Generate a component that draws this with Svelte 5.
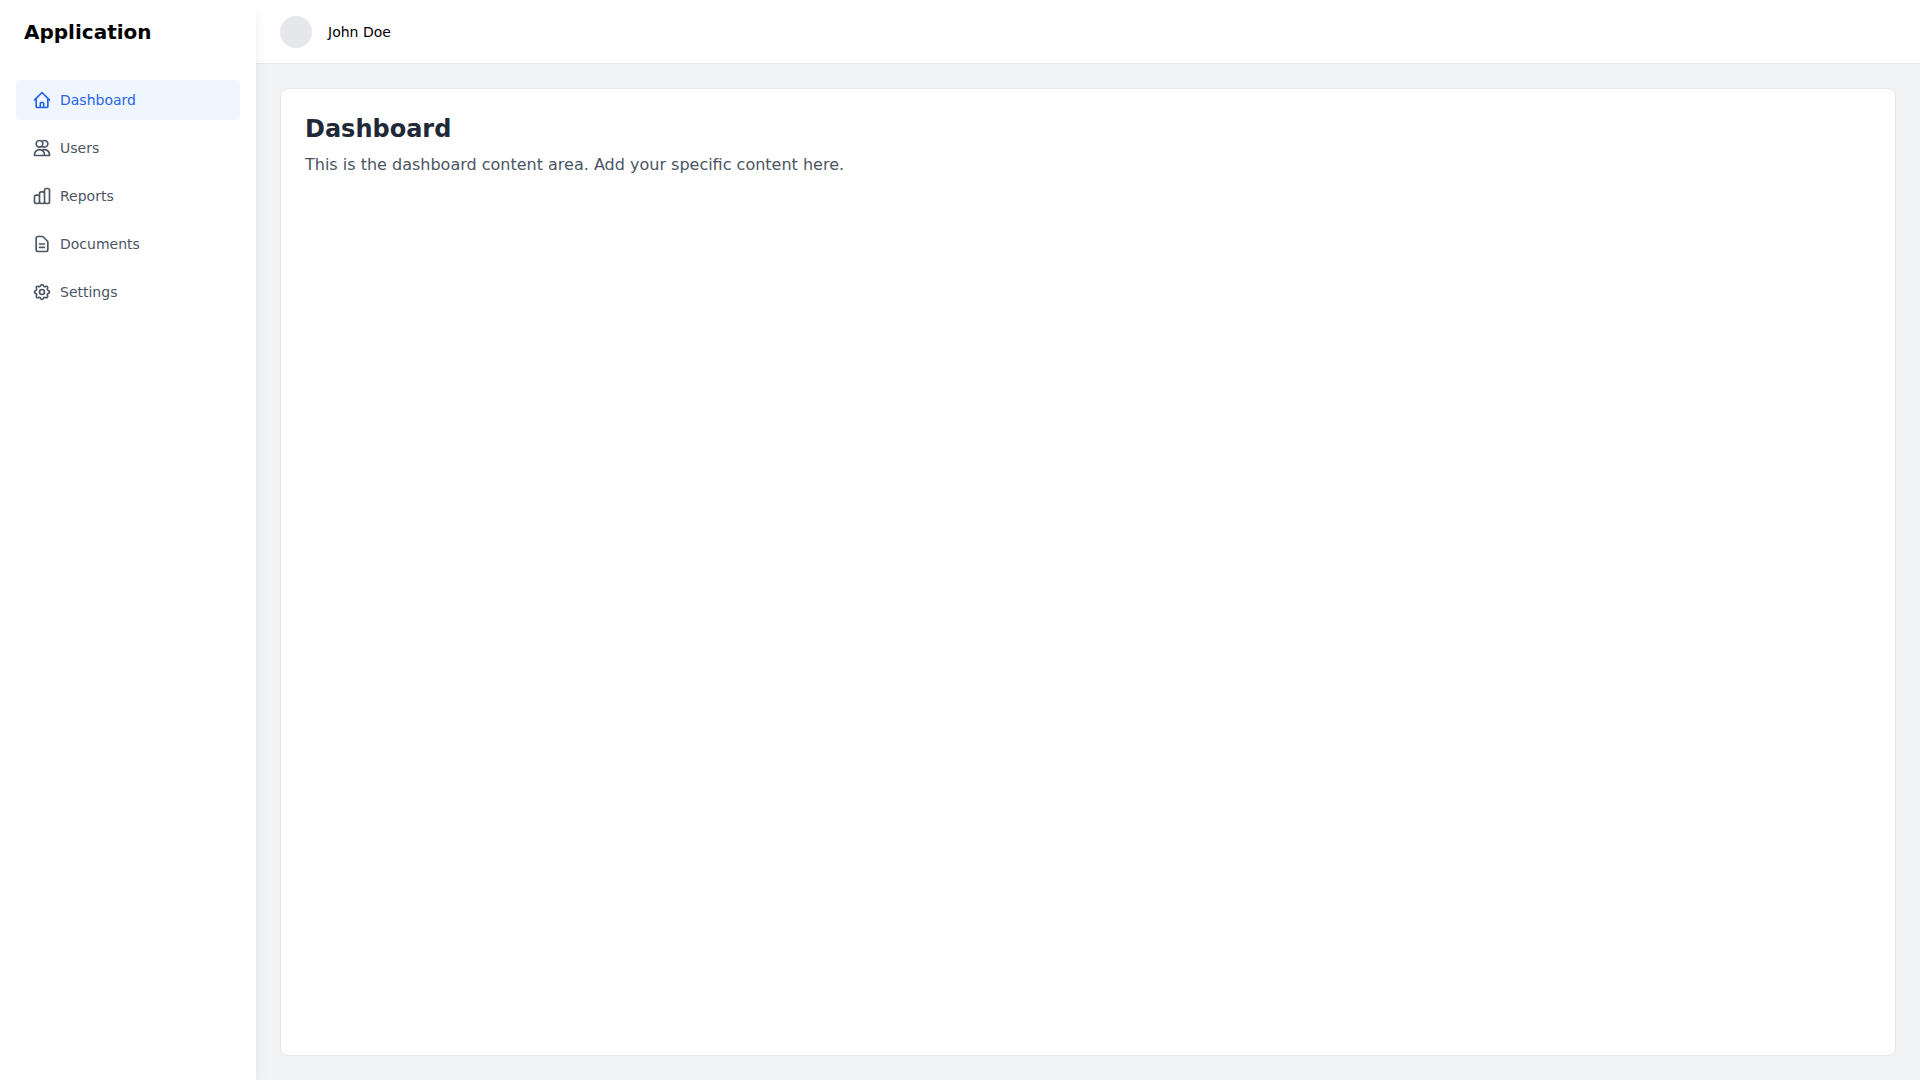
<script>
  let active = "Dashboard";

  const user = { name: "John Doe" };

  const links = [
    {
      name: "Dashboard",
      icon: "M3 12l2-2m0 0l7-7 7 7M5 10v10a1 1 0 001 1h3m10-11l2 2m-2-2v10a1 1 0 01-1 1h-3m-6 0a1 1 0 001-1v-4a1 1 0 011-1h2a1 1 0 011 1v4a1 1 0 001 1m-6 0h6",
    },
    {
      name: "Users",
      icon: "M12 4.354a4 4 0 110 5.292M15 21H3v-1a6 6 0 0112 0v1zm0 0h6v-1a6 6 0 00-9-5.197M13 7a4 4 0 11-8 0 4 4 0 018 0z",
    },
    {
      name: "Reports",
      icon: "M9 19v-6a2 2 0 00-2-2H5a2 2 0 00-2 2v6a2 2 0 002 2h2a2 2 0 002-2zm0 0V9a2 2 0 012-2h2a2 2 0 012 2v10m-6 0a2 2 0 002 2h2a2 2 0 002-2m0 0V5a2 2 0 012-2h2a2 2 0 012 2v14a2 2 0 01-2 2h-2a2 2 0 01-2-2z",
    },
    {
      name: "Documents",
      icon: "M9 12h6m-6 4h6m2 5H7a2 2 0 01-2-2V5a2 2 0 012-2h5.586a1 1 0 01.707.293l5.414 5.414a1 1 0 01.293.707V19a2 2 0 01-2 2z",
    },
    {
      name: "Settings",
      icon: "M10.325 4.317c.426-1.756 2.924-1.756 3.35 0a1.724 1.724 0 002.573 1.066c1.543-.94 3.31.826 2.37 2.37a1.724 1.724 0 001.065 2.572c1.756.426 1.756 2.924 0 3.35a1.724 1.724 0 00-1.066 2.573c.94 1.543-.826 3.31-2.37 2.37a1.724 1.724 0 00-2.572 1.065c-.426 1.756-2.924 1.756-3.35 0a1.724 1.724 0 00-2.573-1.066c-1.543.94-3.31-.826-2.37-2.37a1.724 1.724 0 00-1.065-2.572c-1.756-.426-1.756-2.924 0-3.35a1.724 1.724 0 001.066-2.573c-.94-1.543.826-3.31 2.37-2.37.996.608 2.296.07 2.572-1.065zM15 12a3 3 0 11-6 0 3 3 0 016 0z",
    },
  ];

  const handleClick = (name) => {
    active = name;
  };
</script>

<div class="layout">
  <aside class="sidebar">
    <div class="brand">Application</div>
    <nav>
      {#each links as link}
        <a
          href={"#/" + link.name.toLowerCase()}
          class:active={active === link.name}
          on:click={() => handleClick(link.name)}
        >
          <svg viewBox="0 0 24 24" aria-hidden="true">
            <path d={link.icon} />
          </svg>
          {link.name}
        </a>
      {/each}
    </nav>
  </aside>

  <div class="page">
    <header>
      <div class="avatar"></div>
      <span>{user.name}</span>
    </header>
    <main>
      <section class="card">
        <h1>Dashboard</h1>
        <p>This is the dashboard content area. Add your specific content here.</p>
      </section>
    </main>
  </div>
</div>

<style>
  :global(body) {
    margin: 0;
  }

  .layout {
    display: flex;
    min-height: 100vh;
    background: #f3f4f6;
    font-family: "DejaVu Sans", sans-serif;
  }

  .sidebar {
    position: relative;
    z-index: 1;
    flex-shrink: 0;
    width: 256px;
    background: white;
    box-shadow:
      0 10px 15px -3px rgba(0, 0, 0, 0.1),
      0 4px 6px -4px rgba(0, 0, 0, 0.1);
  }

  .brand {
    display: flex;
    align-items: center;
    height: 64px;
    padding: 0 24px;
    color: black;
    font-size: 20px;
    font-weight: bold;
  }

  nav {
    display: flex;
    flex-direction: column;
    gap: 8px;
    padding: 16px;
  }

  nav a {
    display: flex;
    align-items: center;
    gap: 8px;
    height: 40px;
    padding: 0 16px;
    border-radius: 6px;
    color: #4b5563;
    font-size: 14px;
    text-decoration: none;
  }

  nav a:hover {
    background: #f9fafb;
  }

  nav a.active {
    background: #eff6ff;
    color: #2563eb;
  }

  nav svg {
    width: 20px;
    height: 20px;
    fill: none;
    stroke: currentColor;
    stroke-width: 2;
    stroke-linecap: round;
    stroke-linejoin: round;
  }

  .page {
    display: flex;
    flex: 1;
    flex-direction: column;
    min-width: 0;
  }

  header {
    display: flex;
    align-items: center;
    gap: 16px;
    box-sizing: border-box;
    height: 64px;
    padding: 0 24px;
    background: white;
    border-bottom: 1px solid #e5e7eb;
    color: black;
    font-size: 14px;
  }

  .avatar {
    width: 32px;
    height: 32px;
    border-radius: 50%;
    background: #e5e7eb;
  }

  main {
    display: flex;
    flex: 1;
    padding: 24px;
  }

  .card {
    flex: 1;
    padding: 24px;
    background: white;
    border: 1px solid #e5e7eb;
    border-radius: 8px;
  }

  h1 {
    margin: 0 0 8px;
    color: #1f2937;
    font-size: 24px;
    line-height: 32px;
  }

  p {
    margin: 0;
    color: #4b5563;
    font-size: 16px;
    line-height: 24px;
  }
</style>
